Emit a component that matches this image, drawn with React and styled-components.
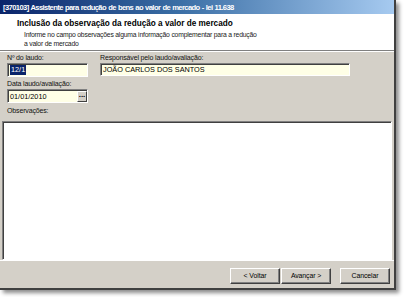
import React from 'react';
import styled, { createGlobalStyle } from 'styled-components';

const GlobalStyle = createGlobalStyle`
  html, body {
    margin: 0;
    padding: 0;
    background: #ffffff;
  }
  body {
    font-family: "Liberation Sans", Arial, sans-serif;
  }
`;

const Page = styled.div`
  width: 404px;
  height: 297px;
  overflow: hidden;
`;

const Window = styled.div`
  display: flex;
  flex-direction: column;
  width: 394px;
  height: 288px;
  background: #d4d0c8;
  border-right: 2px solid #404040;
  border-bottom: 2px solid #404040;
  box-shadow: 3px 3px 4px rgba(0, 0, 0, 0.45);
`;

const TitleBar = styled.div`
  height: 14px;
  display: flex;
  align-items: center;
  padding-left: 3px;
  background: linear-gradient(to right, #0a246a 0%, #3a6ea5 45%, #a6caf0 100%);
  color: #ffffff;
  font-weight: bold;
  font-size: 7.6px;
  letter-spacing: -0.6px;
  word-spacing: 0.6px;
  white-space: nowrap;
`;

const Header = styled.div`
  height: 36px;
  background: #ffffff;
  padding: 5px 0 0 17px;
  box-sizing: border-box;
`;

const Heading = styled.div`
  font-weight: bold;
  font-size: 8.2px;
  line-height: 10px;
  color: #000;
`;

const Description = styled.div`
  padding-left: 7px;
  margin-top: 2px;
  font-size: 6.8px;
  line-height: 8.5px;
  letter-spacing: -0.2px;
  color: #222;
`;

const Separator = styled.div`
  border-top: 1px solid #808080;
  border-bottom: 1px solid #ffffff;
`;

const Body = styled.div`
  padding: 1px 6px 0 7px;
  display: flex;
  flex-direction: column;
`;

const Row = styled.div`
  display: flex;
  gap: 12px;
`;

const Field = styled.div`
  display: flex;
  flex-direction: column;
  width: ${(p) => p.width}px;
  margin-top: ${(p) => p.top || 0}px;
`;

const Label = styled.div`
  font-size: 7px;
  line-height: 10px;
  letter-spacing: -0.15px;
  color: #111;
  white-space: nowrap;
`;

const Input = styled.div`
  height: ${(p) => p.h || 14}px;
  box-sizing: border-box;
  display: flex;
  align-items: center;
  background: #ffffe6;
  border-top: 1px solid #808080;
  border-left: 1px solid #808080;
  border-right: 1px solid #ffffff;
  border-bottom: 1px solid #ffffff;
  box-shadow: inset 1px 1px 0 #404040;
  padding-left: 2px;
  font-size: 7.3px;
  color: #000;
  overflow: hidden;
`;

const Selected = styled.span`
  background: #0a246a;
  color: #ffffff;
  padding: 0 1px;
  line-height: 10px;
`;

const Value = styled.span`
  flex: 1;
`;

const DotsButton = styled.div`
  width: 10px;
  height: 11px;
  box-sizing: border-box;
  background: #d4d0c8;
  border-top: 1px solid #ffffff;
  border-left: 1px solid #ffffff;
  border-right: 1px solid #404040;
  border-bottom: 1px solid #404040;
  font-size: 8px;
  line-height: 5px;
  font-weight: bold;
  text-align: center;
  color: #000;
`;

const Memo = styled.div`
  flex: 1;
  margin: 5px 2px 0 2px;
  background: #ffffff;
  border-top: 1px solid #808080;
  border-left: 1px solid #808080;
  border-right: 1px solid #ffffff;
  border-bottom: 1px solid #ffffff;
  box-shadow: inset 1px 1px 0 #404040;
`;

const Footer = styled.div`
  height: 28px;
  display: flex;
  align-items: center;
  justify-content: flex-end;
  padding: 2px 4px 0 0;
  box-sizing: border-box;
  border-top: 1px solid #ffffff;
`;

const Button = styled.div`
  width: 50px;
  height: 16px;
  box-sizing: border-box;
  margin-left: ${(p) => p.gap || 0}px;
  display: flex;
  align-items: center;
  justify-content: center;
  background: #d4d0c8;
  border-top: 1px solid #ffffff;
  border-left: 1px solid #ffffff;
  border-right: 1px solid #404040;
  border-bottom: 1px solid #404040;
  box-shadow: inset -1px -1px 0 #808080;
  font-size: 6.9px;
  letter-spacing: -0.1px;
  color: #000;
`;

const App = () => (
  <Page>
    <GlobalStyle />
    <Window>
      <TitleBar>[370103] Assistente para redução de bens ao valor de mercado - lei 11.638</TitleBar>
      <Header>
        <Heading>Inclusão da observação da redução a valor de mercado</Heading>
        <Description>
          Informe no campo observações alguma informação complementar para a redução
          <br />
          a valor de mercado
        </Description>
      </Header>
      <Separator />
      <Body>
        <Row>
          <Field width={81}>
            <Label>Nº do laudo:</Label>
            <Input>
              <Selected>12/1</Selected>
            </Input>
          </Field>
          <Field width={250}>
            <Label>Responsável pelo laudo/avaliação:</Label>
            <Input h={13}>
              <Value>JOÃO CARLOS DOS SANTOS</Value>
            </Input>
          </Field>
        </Row>
        <Field width={81} top={2}>
          <Label>Data laudo/avaliação:</Label>
          <Input>
            <Value>01/01/2010</Value>
            <DotsButton>...</DotsButton>
          </Input>
        </Field>
        <Field width={100} top={3}>
          <Label>Observações:</Label>
        </Field>
      </Body>
      <Memo />
      <Footer>
        <Button>&lt; Voltar</Button>
        <Button gap={1}>Avançar &gt;</Button>
        <Button gap={9}>Cancelar</Button>
      </Footer>
    </Window>
  </Page>
);

export default App;
